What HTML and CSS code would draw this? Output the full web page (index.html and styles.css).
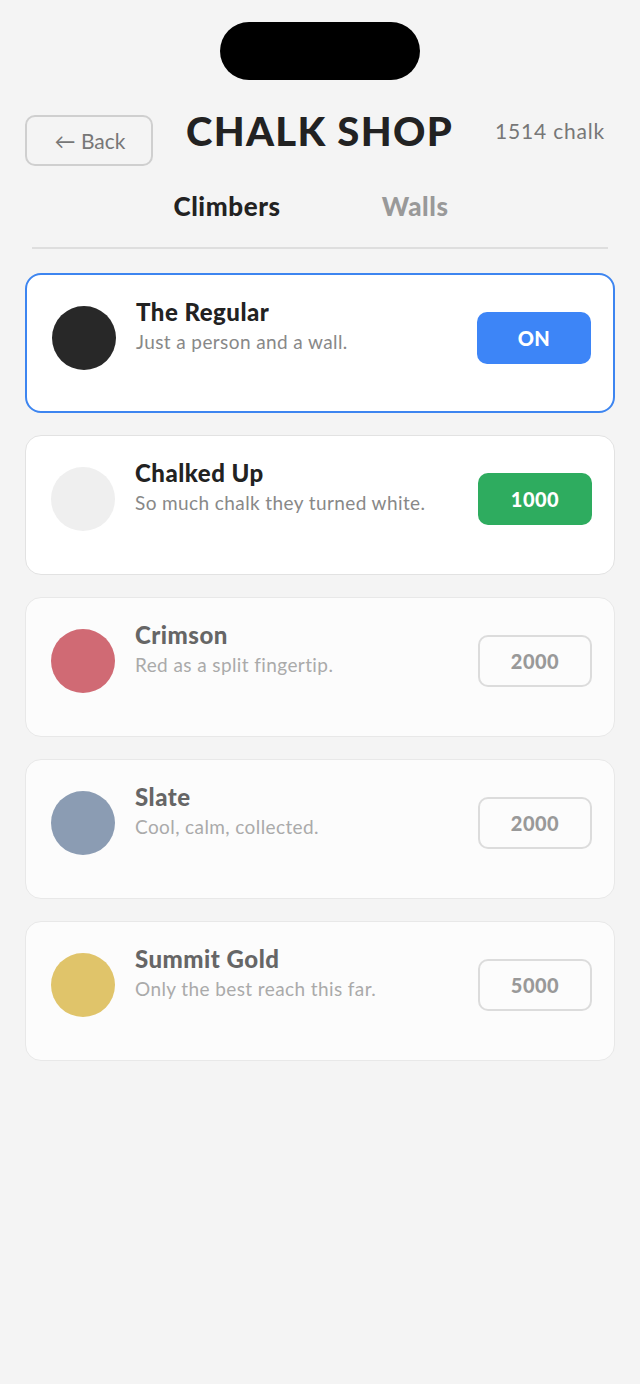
FILE: index.html
```html
<!DOCTYPE html>
<html>
<head>
<meta charset="utf-8">
<link rel="stylesheet" href="styles.css">
</head>
<body>
<div class="screen">
  <div class="notch-row"><div class="notch"></div></div>
  <header class="header">
    <button class="back">← Back</button>
    <h1 class="title">CHALK SHOP</h1>
    <div class="balance">1514 chalk</div>
  </header>
  <nav class="tabs">
    <div class="tab active">Climbers</div>
    <div class="tab">Walls</div>
  </nav>
  <div class="divider"></div>
  <main class="list">
    <div class="card selected">
      <div class="swatch sw-regular"></div>
      <div class="info">
        <div class="name">The Regular</div>
        <div class="desc">Just a person and a wall.</div>
      </div>
      <div class="btn btn-on">ON</div>
    </div>
    <div class="card">
      <div class="swatch sw-chalk"></div>
      <div class="info">
        <div class="name">Chalked Up</div>
        <div class="desc">So much chalk they turned white.</div>
      </div>
      <div class="btn btn-buy">1000</div>
    </div>
    <div class="card locked">
      <div class="swatch sw-crimson"></div>
      <div class="info">
        <div class="name">Crimson</div>
        <div class="desc">Red as a split fingertip.</div>
      </div>
      <div class="btn btn-locked">2000</div>
    </div>
    <div class="card locked">
      <div class="swatch sw-slate"></div>
      <div class="info">
        <div class="name">Slate</div>
        <div class="desc">Cool, calm, collected.</div>
      </div>
      <div class="btn btn-locked">2000</div>
    </div>
    <div class="card locked">
      <div class="swatch sw-gold"></div>
      <div class="info">
        <div class="name">Summit Gold</div>
        <div class="desc">Only the best reach this far.</div>
      </div>
      <div class="btn btn-locked">5000</div>
    </div>
  </main>
</div>
</body>
</html>
```
FILE: styles.css
```css
* { box-sizing: border-box; }
html, body {
  margin: 0;
  padding: 0;
  background: #f4f4f4;
}
body {
  font-family: "Lato", "Noto Sans", sans-serif;
  color: #222;
  width: 640px;
  height: 1384px;
}
.screen {
  display: flex;
  flex-direction: column;
}
.notch-row {
  display: flex;
  justify-content: center;
  padding-top: 22px;
}
.notch {
  width: 200px;
  height: 58px;
  background: #000;
  border-radius: 29px;
}
.header {
  display: flex;
  align-items: flex-start;
  padding: 35px 35px 0 25px;
  height: 86px;
}
.back {
  width: 128px;
  height: 51px;
  border: 2px solid #cfcfcf;
  border-radius: 10px;
  background: transparent;
  font-family: inherit;
  font-size: 21px;
  color: #777;
  padding: 0 0 0 2px;
}
.title {
  margin: -9px 0 0 33px;
  font-size: 40px;
  font-weight: 900;
  color: #222;
  letter-spacing: 1.3px;
  line-height: 50px;
}
.balance {
  margin-left: auto;
  margin-top: 1px;
  font-size: 21px;
  letter-spacing: 0.8px;
  color: #777;
  line-height: 30px;
}
.tabs {
  display: flex;
  justify-content: center;
  gap: 101px;
  margin-top: 24px;
  padding-right: 18px;
}
.tab {
  font-size: 26px;
  font-weight: 900;
  letter-spacing: 0.6px;
  color: #999;
  line-height: 32px;
}
.tab.active { color: #222; }
.divider {
  margin: 25px 32px 0 32px;
  height: 2px;
  background: #dedede;
}
.list {
  display: flex;
  flex-direction: column;
  gap: 22px;
  padding: 24px 25px 0 25px;
}
.card {
  display: flex;
  align-items: flex-start;
  height: 140px;
  background: #fff;
  border: 1.5px solid #e2e2e2;
  border-radius: 16px;
  padding: 31px 22px 0 25px;
}
.card.selected {
  border: 2px solid #3d85f0;
  padding-top: 30.5px;
}
.card.locked {
  background: #fcfcfc;
  border-color: #e8e8e8;
}
.swatch {
  width: 64px;
  height: 64px;
  border-radius: 50%;
  flex: none;
}
.sw-regular { background: #282828; }
.sw-chalk { background: #efefef; }
.sw-crimson { background: #d06a74; }
.sw-slate { background: #8b9cb3; }
.sw-gold { background: #e0c46a; }
.info {
  margin-left: 20px;
  flex: 1;
  display: flex;
  flex-direction: column;
}
.name {
  font-size: 24px;
  font-weight: 900;
  letter-spacing: 0.5px;
  color: #222;
  line-height: 30px;
  margin-top: -9px;
}
.desc {
  font-size: 19px;
  letter-spacing: 0.4px;
  color: #888;
  line-height: 26px;
  margin-top: 2px;
}
.locked .name { color: #666; }
.locked .desc { color: #aaa; }
.btn {
  width: 114px;
  height: 52px;
  border-radius: 10px;
  display: flex;
  align-items: center;
  justify-content: center;
  font-size: 20px;
  font-weight: 900;
  letter-spacing: 0.5px;
  margin-top: 6px;
}
.btn-on { background: #3d85f7; color: #fff; }
.btn-buy { background: #2eac5f; color: #fff; }
.btn-locked {
  border: 2px solid #dcdcdc;
  color: #999;
  background: transparent;
}
```
